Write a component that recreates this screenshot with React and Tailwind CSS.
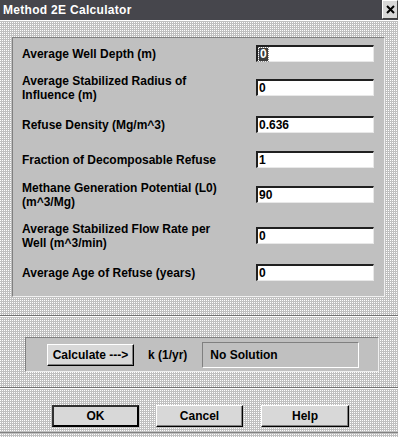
import React from "react";

const dither =
  "bg-[#c0c0c0] bg-[conic-gradient(from_270deg_at_1px_1px,#ffffff_90deg,#c0c0c0_0)] bg-[length:2px_2px]";

const fields = [
  { label: ["Average Well Depth (m)"], value: "0", mt: "mt-0", selected: true },
  { label: ["Average Stabilized Radius of", "Influence (m)"], value: "0", mt: "mt-[3px]" },
  { label: ["Refuse Density (Mg/m^3)"], value: "0.636", mt: "mt-[6px]" },
  { label: ["Fraction of Decomposable Refuse"], value: "1", mt: "mt-[4px]" },
  { label: ["Methane Generation Potential (L0)", "(m^3/Mg)"], value: "90", mt: "mt-[4px]" },
  { label: ["Average Stabilized Flow Rate per", "Well (m^3/min)"], value: "0", mt: "mt-[10px]" },
  { label: ["Average Age of Refuse (years)"], value: "0", mt: "mt-[6px]" },
];

function Field({ label, value, mt, selected }) {
  return (
    <div className={`flex items-center h-[31px] ${mt}`}>
      <div className="w-[243px] pl-[9px] text-[12px] leading-[14px] font-bold text-black">
        {label.map((l) => (
          <div key={l}>{l}</div>
        ))}
      </div>
      <div className="w-[118px] h-[17px] bg-white border-t-2 border-l-2 border-t-[#202020] border-l-[#202020] border-b border-r border-b-[#e8e8e8] border-r-[#e8e8e8] flex items-center pl-[1px] text-[12px] font-bold leading-[13px]">
        {selected ? (
          <span className="bg-[#3c3c3c] text-white px-[1px] outline outline-1 outline-dotted outline-[#888]">
            {value}
          </span>
        ) : (
          <span>{value}</span>
        )}
      </div>
    </div>
  );
}

function WinButton({ children, isDefault, w = "w-[87px]" }) {
  return (
    <div
      className={`${w} h-[22px] bg-[#d8d8d8] flex items-center justify-center text-[12px] font-bold text-black ${
        isDefault
          ? "border-2 border-t-[#303030] border-l-[#303030] border-b-black border-r-black"
          : "border border-t-white border-l-white border-b-black border-r-black shadow-[inset_-1px_-1px_0_#808080]"
      }`}
    >
      {children}
    </div>
  );
}

export default function App() {
  return (
    <div
      className={`w-[398px] h-[437px] flex flex-col ${dither}`}
      style={{ fontFamily: '"Liberation Sans", Arial, sans-serif' }}
    >
      {/* title bar */}
      <div className="h-[21px] bg-[#46464c] flex items-center justify-between pl-[3px] border-b border-white">
        <span className="text-white text-[12px] font-bold tracking-[0.3px]">Method 2E Calculator</span>
        <div className="w-[16px] h-[19px] mb-[1px] bg-[#d8d8d8] border-t border-l border-t-white border-l-white border-b border-r border-b-[#404040] border-r-[#404040] flex items-center justify-center">
          <svg width="9" height="9" viewBox="0 0 9 9">
            <path d="M1 1 L8 8 M8 1 L1 8" stroke="#000" strokeWidth="2" />
          </svg>
        </div>
      </div>

      {/* inputs panel */}
      <div className="mt-[16px] ml-[12px] w-[373px] h-[260px] bg-[#c0c0c0] border-t border-l border-t-[#808080] border-l-[#808080] border-b border-r border-b-[#f0f0f0] border-r-[#f0f0f0]">
        {fields.map((f) => (
          <Field key={f.label[0]} {...f} />
        ))}
      </div>

      {/* separator */}
      <div className="mt-[18px] h-[2px] border-t border-t-[#707070] border-b border-b-white" />

      {/* calculate group */}
      <div className="mt-[20px] ml-[25px] w-[354px] h-[35px] bg-[#c0c0c0] border-t border-l border-t-[#808080] border-l-[#808080] border-b border-r border-b-[#f0f0f0] border-r-[#f0f0f0] flex items-center pl-[21px]">
        <WinButton w="w-[87px]">Calculate ---&gt;</WinButton>
        <span className="ml-[14px] text-[12px] font-bold text-black">k (1/yr)</span>
        <div className="ml-[15px] w-[157px] h-[26px] bg-[#c0c0c0] border-t border-l border-t-[#808080] border-l-[#808080] border-b border-r border-b-white border-r-white flex items-center pl-[7px] text-[12px] font-bold text-black">
          No Solution
        </div>
      </div>

      {/* separator */}
      <div className="mt-[15px] h-[2px] border-t border-t-[#707070] border-b border-b-white" />

      {/* buttons */}
      <div className="mt-[16px] ml-[52px] flex">
        <WinButton isDefault>OK</WinButton>
        <div className="ml-[17px]">
          <WinButton>Cancel</WinButton>
        </div>
        <div className="ml-[18px]">
          <WinButton w="w-[88px]">Help</WinButton>
        </div>
      </div>

      <div className="mt-[5px] h-[1px] bg-[#808080]" />
    </div>
  );
}
